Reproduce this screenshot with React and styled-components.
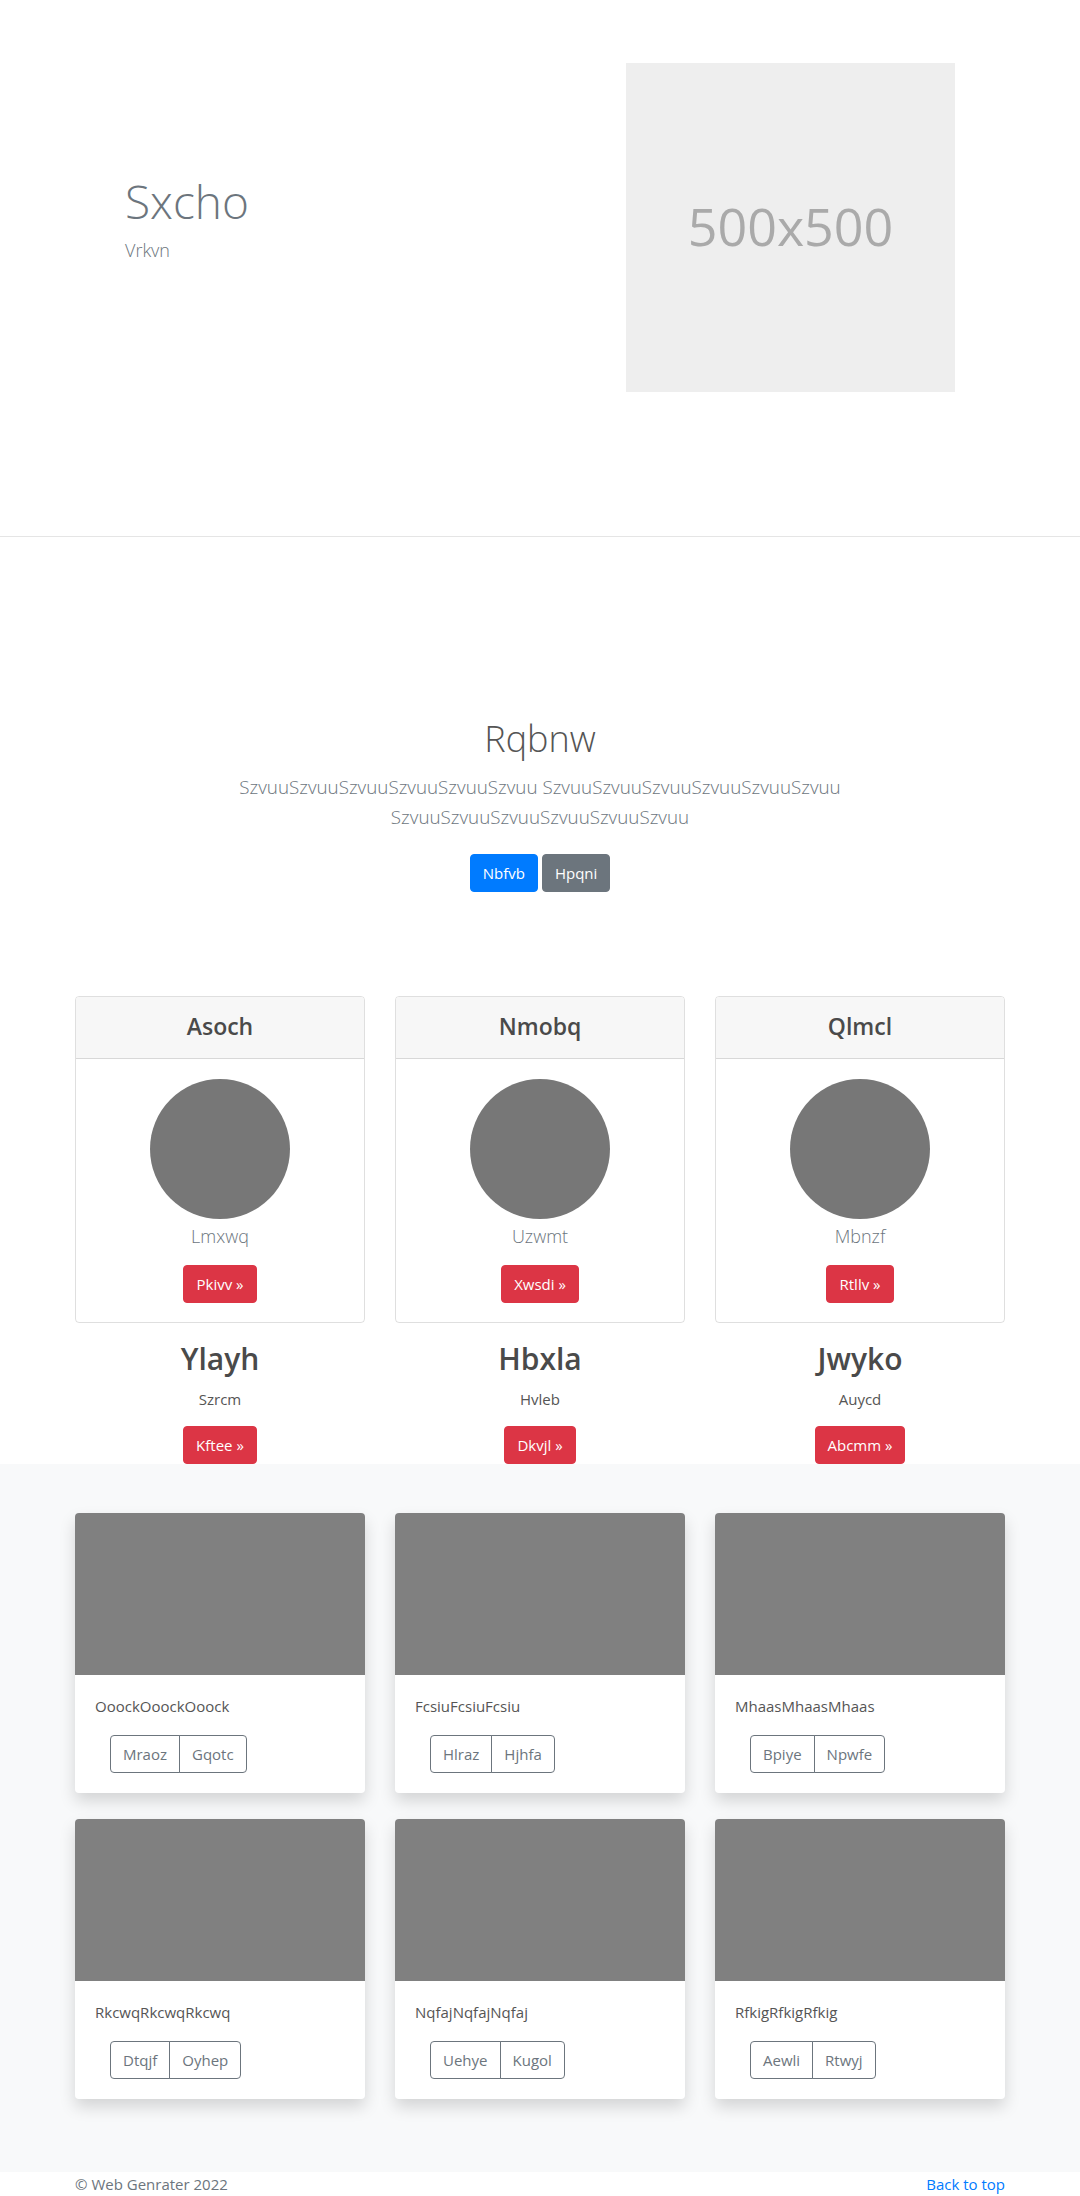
import React from "react";
import styled, { createGlobalStyle } from "styled-components";

const Global = createGlobalStyle`
  html, body { margin: 0; padding: 0; background: #fff; }
  body {
    font-family: "Open Sans", "Noto Sans", "Liberation Sans", sans-serif;
    font-size: 15px;
    line-height: 24px;
    color: #212529;
  }
  * { box-sizing: border-box; }
`;

const Container = styled.div`
  width: 930px;
  margin: 0 auto;
`;

/* ---------- Hero ---------- */
const Hero = styled.section`
  border-bottom: 1px solid #e5e5e5;
  height: 537px;
`;
const HeroRow = styled.div`
  width: 960px;
  margin: 0 auto;
  display: grid;
  grid-template-columns: 1fr 1fr;
  padding-top: 63px;
`;
const HeroText = styled.div`
  padding-left: 65px;
  padding-top: 111px;
`;
const HeroTitle = styled.h1`
  margin: 0 0 8px;
  font-size: 46px;
  line-height: 1.2;
  font-weight: 300;
  color: #6c757d;
`;
const HeroSub = styled.p`
  margin: 0;
  font-size: 18px;
  line-height: 27px;
  font-weight: 300;
  color: #6c757d;
`;
const Placeholder = styled.div`
  margin-left: 86px;
  width: 329px;
  height: 329px;
  background: #eeeeee;
  color: #aaaaaa;
  display: flex;
  align-items: center;
  justify-content: center;
  font-size: 52px;
  font-weight: 400;
  padding-bottom: 4px;
`;

/* ---------- Jumbotron ---------- */
const Jumbo = styled.section`
  padding: 180px 0 104px;
  text-align: center;
`;
const JumboTitle = styled.h1`
  margin: 0 0 12px;
  font-size: 36px;
  line-height: 1.2;
  font-weight: 300;
  color: #555;
`;
const Lead = styled.p`
  width: 616px;
  margin: 0 auto 22px;
  font-size: 18.8px;
  line-height: 30px;
  font-weight: 300;
  color: #6c757d;
`;
const ButtonRow = styled.div`
  display: flex;
  justify-content: center;
  gap: 4px;
`;
const Btn = styled.a`
  display: inline-block;
  height: 38px;
  padding: 6px 12px;
  border: 1px solid ${(p) => p.$bg};
  border-radius: 4px;
  background: ${(p) => p.$bg};
  color: #fff;
  font-size: 15px;
  line-height: 24px;
  font-weight: 400;
  text-decoration: none;
  white-space: nowrap;
`;

/* ---------- Feature cards ---------- */
const Grid3 = styled.div`
  display: grid;
  grid-template-columns: repeat(3, 290px);
  column-gap: 30px;
  row-gap: ${(p) => p.$rowGap || 0}px;
`;
const PriceCard = styled.div`
  border: 1px solid rgba(0, 0, 0, 0.125);
  border-radius: 4px;
  overflow: hidden;
  text-align: center;
`;
const CardHeader = styled.div`
  height: 62px;
  background: #f7f7f7;
  border-bottom: 1px solid rgba(0, 0, 0, 0.125);
  display: flex;
  align-items: center;
  justify-content: center;
  font-size: 23px;
  font-weight: 600;
  color: #4a4a4a;
  padding-bottom: 4px;
`;
const CardBody = styled.div`
  padding: 20px 20px 19px;
  display: flex;
  flex-direction: column;
  align-items: center;
`;
const Avatar = styled.div`
  width: 140px;
  height: 140px;
  border-radius: 50%;
  background: #777777;
`;
const AvatarName = styled.div`
  margin: 2px 0 14px;
  font-size: 18px;
  line-height: 30px;
  font-weight: 300;
  color: #6c757d;
`;

const Feature = styled.div`
  display: flex;
  flex-direction: column;
  align-items: center;
  padding-top: 18px;
`;
const FeatureTitle = styled.h2`
  margin: 0 0 10px;
  font-size: 30px;
  line-height: 36px;
  font-weight: 600;
  color: #4a4a4a;
`;
const FeatureText = styled.p`
  margin: 0 0 15px;
  font-size: 15px;
  line-height: 24px;
  color: #555;
`;

/* ---------- Album ---------- */
const Album = styled.section`
  background: #f8f9fa;
  padding: 49px 0 73px;
`;
const AlbumCard = styled.div`
  background: #fff;
  border-radius: 4px;
  overflow: hidden;
  box-shadow: 0 8px 16px rgba(0, 0, 0, 0.15);
`;
const Thumb = styled.div`
  height: 162px;
  background: #808080;
`;
const AlbumBody = styled.div`
  padding: 19px 20px 20px;
`;
const AlbumText = styled.p`
  margin: 0 0 17px;
  font-size: 15px;
  line-height: 24px;
  color: #555;
`;
const BtnGroup = styled.div`
  display: inline-flex;
  margin-left: 15px;
`;
const OutlineBtn = styled.a`
  height: 38px;
  padding: 6px 12px;
  border: 1px solid #6c757d;
  color: #6c757d;
  font-size: 15px;
  line-height: 24px;
  text-decoration: none;
  background: transparent;
  &:first-child { border-radius: 4px 0 0 4px; }
  &:last-child { border-radius: 0 4px 4px 0; margin-left: -1px; }
`;

/* ---------- Footer ---------- */
const Footer = styled.footer`
  height: 24px;
  overflow: hidden;
`;
const FooterRow = styled(Container)`
  display: flex;
  justify-content: space-between;
  font-size: 15px;
  line-height: 24px;
  color: #6c757d;
`;
const TopLink = styled.a`
  color: #007bff;
  text-decoration: none;
`;

const pricing = [
  { title: "Asoch", name: "Lmxwq", btn: "Pkivv" },
  { title: "Nmobq", name: "Uzwmt", btn: "Xwsdi" },
  { title: "Qlmcl", name: "Mbnzf", btn: "Rtllv" },
];
const features = [
  { title: "Ylayh", text: "Szrcm", btn: "Kftee" },
  { title: "Hbxla", text: "Hvleb", btn: "Dkvjl" },
  { title: "Jwyko", text: "Auycd", btn: "Abcmm" },
];
const album = [
  { text: "OoockOoockOoock", a: "Mraoz", b: "Gqotc" },
  { text: "FcsiuFcsiuFcsiu", a: "Hlraz", b: "Hjhfa" },
  { text: "MhaasMhaasMhaas", a: "Bpiye", b: "Npwfe" },
  { text: "RkcwqRkcwqRkcwq", a: "Dtqjf", b: "Oyhep" },
  { text: "NqfajNqfajNqfaj", a: "Uehye", b: "Kugol" },
  { text: "RfkigRfkigRfkig", a: "Aewli", b: "Rtwyj" },
];

export default function App() {
  return (
    <>
      <Global />
      <Hero>
        <HeroRow>
          <HeroText>
            <HeroTitle>Sxcho</HeroTitle>
            <HeroSub>Vrkvn</HeroSub>
          </HeroText>
          <Placeholder>500x500</Placeholder>
        </HeroRow>
      </Hero>

      <Jumbo>
        <JumboTitle>Rqbnw</JumboTitle>
        <Lead>
          SzvuuSzvuuSzvuuSzvuuSzvuuSzvuu SzvuuSzvuuSzvuuSzvuuSzvuuSzvuu
          SzvuuSzvuuSzvuuSzvuuSzvuuSzvuu
        </Lead>
        <ButtonRow>
          <Btn $bg="#007bff">Nbfvb</Btn>
          <Btn $bg="#6c757d">Hpqni</Btn>
        </ButtonRow>
      </Jumbo>

      <Container>
        <Grid3>
          {pricing.map((c) => (
            <PriceCard key={c.title}>
              <CardHeader>{c.title}</CardHeader>
              <CardBody>
                <Avatar />
                <AvatarName>{c.name}</AvatarName>
                <Btn $bg="#dc3545">{c.btn} »</Btn>
              </CardBody>
            </PriceCard>
          ))}
        </Grid3>
        <Grid3>
          {features.map((f) => (
            <Feature key={f.title}>
              <FeatureTitle>{f.title}</FeatureTitle>
              <FeatureText>{f.text}</FeatureText>
              <Btn $bg="#dc3545">{f.btn} »</Btn>
            </Feature>
          ))}
        </Grid3>
      </Container>

      <Album>
        <Container>
          <Grid3 $rowGap={26}>
            {album.map((c) => (
              <AlbumCard key={c.text}>
                <Thumb />
                <AlbumBody>
                  <AlbumText>{c.text}</AlbumText>
                  <BtnGroup>
                    <OutlineBtn>{c.a}</OutlineBtn>
                    <OutlineBtn>{c.b}</OutlineBtn>
                  </BtnGroup>
                </AlbumBody>
              </AlbumCard>
            ))}
          </Grid3>
        </Container>
      </Album>

      <Footer>
        <FooterRow>
          <span>© Web Genrater 2022</span>
          <TopLink href="#">Back to top</TopLink>
        </FooterRow>
      </Footer>
    </>
  );
}
